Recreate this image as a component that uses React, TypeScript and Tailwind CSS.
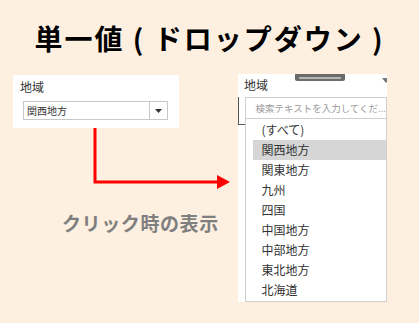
const regions = ["(すべて)", "関西地方", "関東地方", "九州", "四国", "中国地方", "中部地方", "東北地方", "北海道"];

function App() {
  const selected = "関西地方";

  return (
    <div
      className="w-[419px] h-[323px] bg-[#fdf0e1] overflow-hidden"
      style={{ fontFamily: '"Noto Sans CJK JP", "Noto Sans", sans-serif' }}
    >
      <div className="h-[74px] pt-[20px] text-center">
        <h1 className="text-[28px] leading-[36px] font-bold text-black tracking-[2px]">単一値 ( ドロップダウン )</h1>
      </div>

      <div className="flex">
        {/* left: closed select + arrow */}
        <div className="ml-[13px] w-[218px] flex flex-col">
          <div className="mt-[1px] w-[166px] h-[53px] bg-white pt-[3px] pl-[7px]">
            <div className="text-[12px] leading-[18px] text-[#333]">地域</div>
            <div className="mt-[5px] ml-[3px] w-[145px] h-[19px] border border-[#c8c8c8] flex">
              <div className="flex-1 pl-[3px] text-[10px] leading-[17px] text-[#333]">関西地方</div>
              <div className="w-[18px] border-l border-[#c8c8c8] flex items-center justify-center">
                <svg width="7" height="4" viewBox="0 0 7 4">
                  <path d="M0 0 L7 0 L3.5 4 Z" fill="#333" />
                </svg>
              </div>
            </div>
          </div>
          <svg width="218" height="62" viewBox="0 0 218 62" className="block">
            <path d="M82 0 V54 H205" stroke="#ff0000" strokeWidth="3" fill="none" />
            <path d="M204 47 L217 54 L204 61 Z" fill="#ff0000" />
          </svg>
          <div className="mt-[21px] ml-[49px] text-[19px] leading-[24px] font-bold text-[#7f7f7f] tracking-[0.6px]">クリック時の表示</div>
        </div>

        {/* right: opened dropdown */}
        <div className="ml-[7px] relative w-[149px] h-[228px] bg-white overflow-hidden">
          <div className="absolute left-[57px] top-0 w-[50px] h-[7px] rounded-b-[2px] bg-[#6b6b6b] flex items-center justify-center">
            <div className="w-[42px] h-[2px] bg-[#b5b5b5]" />
          </div>
          <svg width="5" height="5" viewBox="0 0 5 5" className="absolute right-0 top-[4px]">
            <path d="M0 0 L8 0 L4 5 Z" fill="#777" />
          </svg>
          <div className="h-[23px] pl-[6px] pt-[2px] text-[12px] leading-[18px] text-[#333]">地域</div>
          <div className="flex">
            <div className="w-[9px]">
              <div className="h-[28px] border-l border-b border-[#555]" />
            </div>
            <div className="flex-1 h-[205px] border-l border-r border-b border-[#cfcfcf]">
              <div className="h-[22px] border-t border-b border-[#cfcfcf] pl-[9px] text-[9.5px] leading-[20px] text-[#9a9a9a] whitespace-nowrap overflow-hidden">
                検索テキストを入力してくだ...
              </div>
              <div className="pt-[1px]">
                {regions.map((r) => (
                  <div
                    key={r}
                    className={
                      r === selected
                        ? "ml-[7px] h-[20px] pl-[8px] text-[12px] leading-[20px] text-[#333] bg-[#d6d6d6]"
                        : "ml-[7px] h-[20px] pl-[8px] text-[12px] leading-[20px] text-[#333]"
                    }
                  >
                    {r}
                  </div>
                ))}
              </div>
            </div>
          </div>
        </div>
      </div>
    </div>
  );
}

export default App;
